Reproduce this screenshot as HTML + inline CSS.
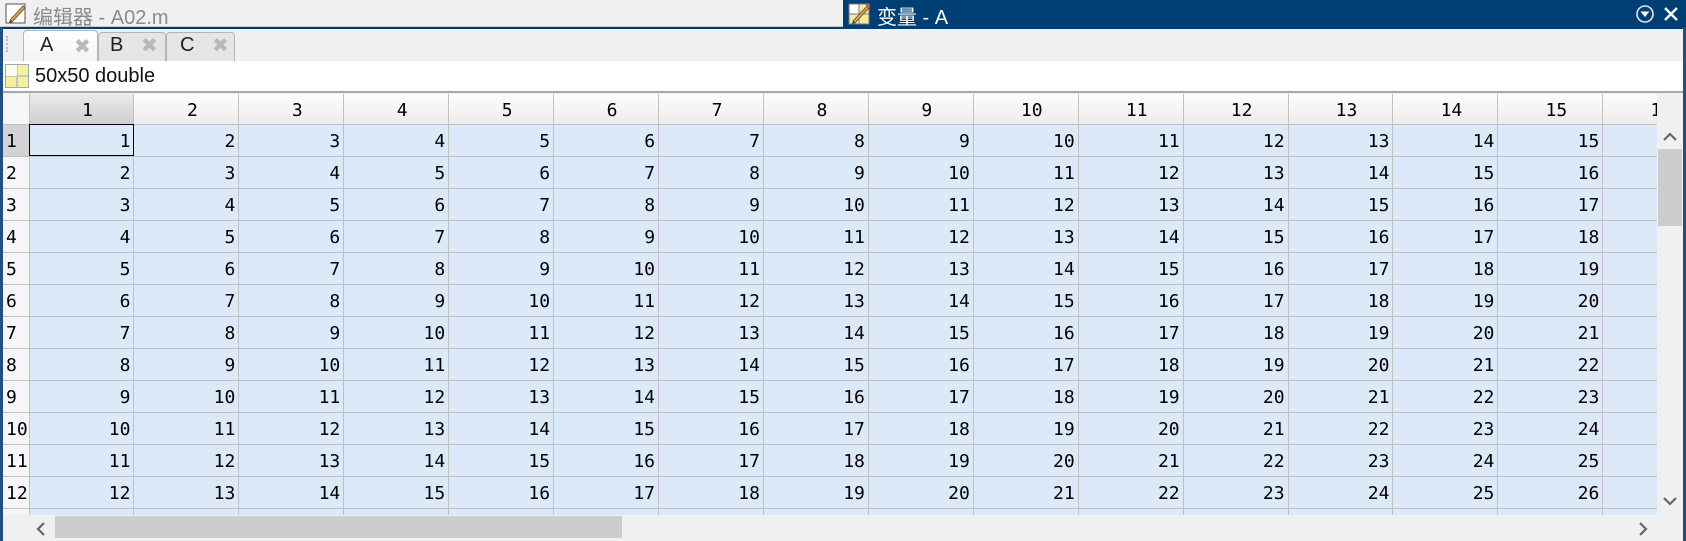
<!DOCTYPE html><html><head><meta charset="utf-8"><style>
*{margin:0;padding:0;box-sizing:border-box}
body{width:1686px;height:541px;overflow:hidden;background:#f0f0f0;position:relative;font-family:"Liberation Sans","Noto Sans CJK SC",sans-serif}
.abs{position:absolute}
#tl{left:0;top:0;width:843px;height:27px;background:#f0f0f0;border-bottom:1px solid #c8c8c8}
#tr{left:843px;top:0;width:843px;height:27px;background:#003f74;color:#fff}
#bl{left:0;top:27px;width:1686px;height:2px;background:#003f74}
#lb{left:0;top:27px;width:3px;height:514px;background:#1f4f84}
#rb{left:1683px;top:27px;width:3px;height:514px;background:#1f4f84}
.tab{top:30px;height:31px;border:1px solid #b4b4b4;border-bottom:none;border-radius:4px 4px 0 0;font-size:20px;color:#222}
.tab span{position:absolute;top:3px}
.x{position:absolute;top:2px;color:#b9b9b9;font-size:20px}
#info{left:3px;top:61px;width:1680px;height:32px;background:#fff;border-bottom:2px solid #a8a8a8}
#grid{left:3px;top:94px;width:1654px;height:421px;overflow:hidden;background:#fff}
table{border-collapse:collapse;table-layout:fixed;font-family:"DejaVu Sans Mono","Liberation Mono",monospace;font-size:18px;color:#000}
td,th{height:32px;border:1px solid #c0c0c0;text-align:right;padding-right:3px;padding-top:3px;font-weight:normal;overflow:hidden;white-space:nowrap}
td{background:#dce9f9}
tr.h th{height:30px;background:linear-gradient(#fdfdfd,#ececec);text-align:center;padding:3px 0 0 12px;border-top:none}
th.r{text-align:left;padding:3px 0 0 3px;background:#f6f6f6;border-left:none}
tr.h th.sel{background:linear-gradient(#eaeaea,#cfcfcf)}
th.rs{background:#d3d3d3}
</style></head><body>
<div id="tl" class="abs">
<svg class="abs" style="left:5px;top:3px" width="22" height="22"><rect x="1" y="1" width="19" height="19" fill="#fff" stroke="#555"/><path d="M5 17 L18 3 L20 5 L7 19 Z" fill="#d9a05b" stroke="#6b4a1e" stroke-width=".8"/><path d="M4 20 L5 17 L7 19 Z" fill="#333"/></svg>
<div class="abs" style="left:33px;top:1px;font-size:20px;color:#8a8a8a">编辑器 - A02.m</div></div>
<div id="tr" class="abs">
<svg class="abs" style="left:5px;top:2px" width="24" height="24"><rect x="1" y="2" width="20" height="20" fill="#f3ec9c" stroke="#777"/><path d="M1 12H21M11 2V22" stroke="#888"/><rect x="1" y="2" width="10" height="10" fill="#fff" stroke="#777"/><path d="M5 19 L19 4 L21 6 L7 21 Z" fill="#d9a05b" stroke="#6b4a1e" stroke-width=".8"/><path d="M4 22 L5 19 L7 21 Z" fill="#333"/><circle cx="20" cy="4" r="2" fill="#c3577a"/></svg>
<div class="abs" style="left:34px;top:1px;font-size:20px">变量 - A</div>
<svg class="abs" style="left:792px;top:4px" width="20" height="20"><circle cx="10" cy="10" r="8" fill="none" stroke="#dfe6ee" stroke-width="1.6"/><path d="M5.5 7.5H14.5L10 13Z" fill="#fff"/></svg>
<svg class="abs" style="left:820px;top:6px" width="16" height="16"><path d="M2 2L14 14M14 2L2 14" stroke="#fff" stroke-width="2.4"/></svg>
</div>
<div id="bl" class="abs"></div>
<div class="abs" style="left:6px;top:36px;width:3px;height:16px;border-left:2px dotted #bbb"></div>
<div class="tab abs" style="left:23px;width:75px;background:linear-gradient(#fff,#f3f3f3)"><span style="left:16px">A</span><span class="x" style="left:50px">✖</span></div>
<div class="tab abs" style="left:98px;width:68px;background:#e5e5e5;top:32px"><span style="left:11px;top:1px">B</span><span class="x" style="left:42px;top:0">✖</span></div>
<div class="tab abs" style="left:166px;width:69px;background:#e5e5e5;top:32px"><span style="left:13px;top:1px">C</span><span class="x" style="left:45px;top:0">✖</span></div>
<div id="info" class="abs">
<svg class="abs" style="left:2px;top:3px" width="24" height="24"><rect x=".5" y=".5" width="23" height="23" fill="#f5efa0" stroke="#9ab"/><path d="M12 1V23M1 12H23" stroke="#9ab"/><rect x="1" y="1" width="11" height="11" fill="#fbfbf0"/></svg>
<div class="abs" style="left:32px;top:4px;font-size:20px;color:#111">50x50 double</div></div>
<div id="grid" class="abs"><table style="width:1705px"><colgroup><col style="width:26px"><col span="16" style="width:104.93px"></colgroup>
<tr class="h"><th class="r" style="background:#f6f6f6"></th><th class="sel">1</th><th>2</th><th>3</th><th>4</th><th>5</th><th>6</th><th>7</th><th>8</th><th>9</th><th>10</th><th>11</th><th>12</th><th>13</th><th>14</th><th>15</th><th>16</th></tr>
<tr><th class="r rs">1</th><td style="outline:1px solid #000;outline-offset:-1px">1</td><td>2</td><td>3</td><td>4</td><td>5</td><td>6</td><td>7</td><td>8</td><td>9</td><td>10</td><td>11</td><td>12</td><td>13</td><td>14</td><td>15</td><td>16</td></tr>
<tr><th class="r">2</th><td>2</td><td>3</td><td>4</td><td>5</td><td>6</td><td>7</td><td>8</td><td>9</td><td>10</td><td>11</td><td>12</td><td>13</td><td>14</td><td>15</td><td>16</td><td>17</td></tr>
<tr><th class="r">3</th><td>3</td><td>4</td><td>5</td><td>6</td><td>7</td><td>8</td><td>9</td><td>10</td><td>11</td><td>12</td><td>13</td><td>14</td><td>15</td><td>16</td><td>17</td><td>18</td></tr>
<tr><th class="r">4</th><td>4</td><td>5</td><td>6</td><td>7</td><td>8</td><td>9</td><td>10</td><td>11</td><td>12</td><td>13</td><td>14</td><td>15</td><td>16</td><td>17</td><td>18</td><td>19</td></tr>
<tr><th class="r">5</th><td>5</td><td>6</td><td>7</td><td>8</td><td>9</td><td>10</td><td>11</td><td>12</td><td>13</td><td>14</td><td>15</td><td>16</td><td>17</td><td>18</td><td>19</td><td>20</td></tr>
<tr><th class="r">6</th><td>6</td><td>7</td><td>8</td><td>9</td><td>10</td><td>11</td><td>12</td><td>13</td><td>14</td><td>15</td><td>16</td><td>17</td><td>18</td><td>19</td><td>20</td><td>21</td></tr>
<tr><th class="r">7</th><td>7</td><td>8</td><td>9</td><td>10</td><td>11</td><td>12</td><td>13</td><td>14</td><td>15</td><td>16</td><td>17</td><td>18</td><td>19</td><td>20</td><td>21</td><td>22</td></tr>
<tr><th class="r">8</th><td>8</td><td>9</td><td>10</td><td>11</td><td>12</td><td>13</td><td>14</td><td>15</td><td>16</td><td>17</td><td>18</td><td>19</td><td>20</td><td>21</td><td>22</td><td>23</td></tr>
<tr><th class="r">9</th><td>9</td><td>10</td><td>11</td><td>12</td><td>13</td><td>14</td><td>15</td><td>16</td><td>17</td><td>18</td><td>19</td><td>20</td><td>21</td><td>22</td><td>23</td><td>24</td></tr>
<tr><th class="r">10</th><td>10</td><td>11</td><td>12</td><td>13</td><td>14</td><td>15</td><td>16</td><td>17</td><td>18</td><td>19</td><td>20</td><td>21</td><td>22</td><td>23</td><td>24</td><td>25</td></tr>
<tr><th class="r">11</th><td>11</td><td>12</td><td>13</td><td>14</td><td>15</td><td>16</td><td>17</td><td>18</td><td>19</td><td>20</td><td>21</td><td>22</td><td>23</td><td>24</td><td>25</td><td>26</td></tr>
<tr><th class="r">12</th><td>12</td><td>13</td><td>14</td><td>15</td><td>16</td><td>17</td><td>18</td><td>19</td><td>20</td><td>21</td><td>22</td><td>23</td><td>24</td><td>25</td><td>26</td><td>27</td></tr>
<tr><th class="r"></th><td></td><td></td><td></td><td></td><td></td><td></td><td></td><td></td><td></td><td></td><td></td><td></td><td></td><td></td><td></td><td></td></tr>
</table></div>
<div class="abs" style="left:1658px;top:149px;width:24px;height:77px;background:#cdcdcd"></div>
<svg class="abs" style="left:1662px;top:131px" width="16" height="12"><path d="M2 9L8 3L14 9" fill="none" stroke="#666" stroke-width="2.2"/></svg>
<svg class="abs" style="left:1662px;top:495px" width="16" height="12"><path d="M2 3L8 9L14 3" fill="none" stroke="#666" stroke-width="2.2"/></svg>
<div class="abs" style="left:55px;top:516px;width:567px;height:22px;background:#cdcdcd"></div>
<svg class="abs" style="left:35px;top:521px" width="12" height="16"><path d="M9 2L3 8L9 14" fill="none" stroke="#666" stroke-width="2.2"/></svg>
<svg class="abs" style="left:1637px;top:521px" width="12" height="16"><path d="M3 2L9 8L3 14" fill="none" stroke="#666" stroke-width="2.2"/></svg>
<div id="lb" class="abs"></div><div id="rb" class="abs"></div>
</body></html>
